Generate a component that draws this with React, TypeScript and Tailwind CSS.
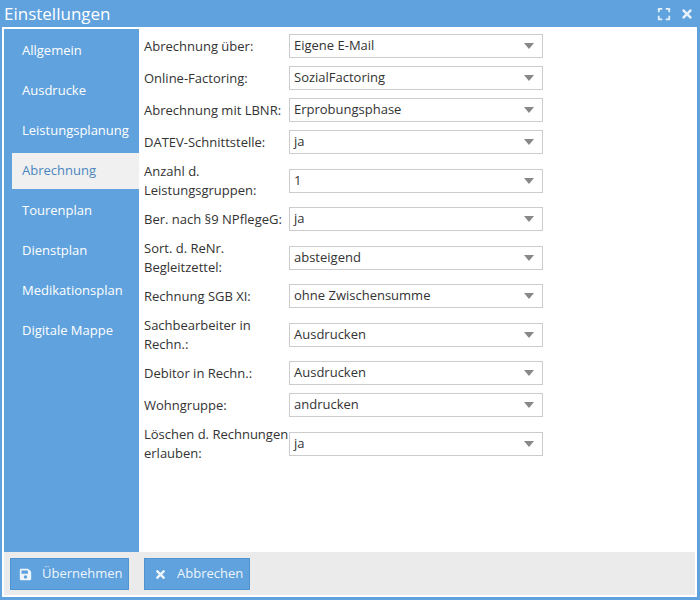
import { FaExpand, FaSave, FaTimes } from "react-icons/fa"

const menu = [
  "Allgemein",
  "Ausdrucke",
  "Leistungsplanung",
  "Abrechnung",
  "Tourenplan",
  "Dienstplan",
  "Medikationsplan",
  "Digitale Mappe",
]

const fields: { label: string; value: string }[] = [
  { label: "Abrechnung über:", value: "Eigene E-Mail" },
  { label: "Online-Factoring:", value: "SozialFactoring" },
  { label: "Abrechnung mit LBNR:", value: "Erprobungsphase" },
  { label: "DATEV-Schnittstelle:", value: "ja" },
  { label: "Anzahl d. Leistungsgruppen:", value: "1" },
  { label: "Ber. nach §9 NPflegeG:", value: "ja" },
  { label: "Sort. d. ReNr. Begleitzettel:", value: "absteigend" },
  { label: "Rechnung SGB XI:", value: "ohne Zwischensumme" },
  { label: "Sachbearbeiter in Rechn.:", value: "Ausdrucken" },
  { label: "Debitor in Rechn.:", value: "Ausdrucken" },
  { label: "Wohngruppe:", value: "andrucken" },
  { label: "Löschen d. Rechnungen erlauben:", value: "ja" },
]

function Select({ value }: { value: string }) {
  return (
    <div className="flex h-[24px] w-[254px] shrink-0 items-center justify-between border border-[#cccccc] bg-white pl-[4px] pr-[8px] text-[13px] text-[#333]">
      <span>{value}</span>
      <span className="h-0 w-0 border-x-[5px] border-t-[6px] border-x-transparent border-t-[#888]" />
    </div>
  )
}

export default function App() {
  return (
    <div
      className="flex h-[600px] w-[700px] flex-col bg-[#5fa2dd]"
      style={{ fontFamily: '"Open Sans", "Liberation Sans", sans-serif' }}
    >
      <div className="flex h-[27px] shrink-0 items-center justify-between pl-[4px] pr-[6px]">
        <span className="text-[17px] leading-none text-white">Einstellungen</span>
        <div className="flex items-center gap-[9px] text-[#e6f1fb]">
          <FaExpand size={14} />
          <FaTimes size={14} />
        </div>
      </div>

      <div className="mb-[3px] ml-[2px] mr-[3px] flex flex-1 flex-col bg-white p-[2px]">
        <div className="flex flex-1">
          <div className="flex w-[135px] shrink-0 flex-col gap-[4px] bg-[#5fa2dd] pt-[4px]">
            {menu.map((item) => {
              const active = item === "Abrechnung"
              return (
                <div
                  key={item}
                  className={`ml-[8px] flex h-[36px] items-center pl-[10px] text-[13px] ${
                    active ? "bg-[#f0f0f0] text-[#4a86bf]" : "text-white"
                  }`}
                >
                  {item}
                </div>
              )
            })}
          </div>

          <div className="flex flex-1 flex-col gap-[8px] pl-[5px] pt-[5px]">
            {fields.map((f) => (
              <div key={f.label} className="flex min-h-[24px] items-center">
                <div className="w-[145px] shrink-0 text-[13px] leading-[18.5px] text-[#333]">
                  {f.label}
                </div>
                <Select value={f.value} />
              </div>
            ))}
          </div>
        </div>

        <div className="flex h-[43px] shrink-0 gap-[15px] bg-[#ebebeb] pl-[6px] pt-[6px]">
          <button className="flex h-[32px] w-[119px] items-center gap-[10px] border border-[#4f93d0] bg-[#5fa2dd] pl-[8px] text-[13px] text-[#eef5fc]">
            <FaSave size={13} />
            Übernehmen
          </button>
          <button className="flex h-[32px] w-[106px] items-center gap-[10px] border border-[#4f93d0] bg-[#5fa2dd] pl-[9px] text-[13px] text-[#eef5fc]">
            <FaTimes size={13} />
            Abbrechen
          </button>
        </div>
      </div>
    </div>
  )
}
